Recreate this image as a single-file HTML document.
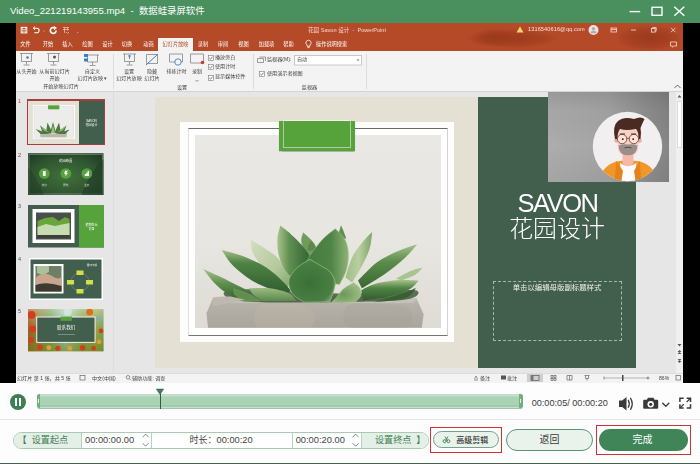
<!DOCTYPE html>
<html lang="zh-CN">
<head>
<meta charset="utf-8">
<title>Video_221219143955.mp4 - 数据蛙录屏软件</title>
<style>
html,body{margin:0;padding:0;}
body{width:700px;height:464px;position:relative;overflow:hidden;background:#fdfdfd;font-family:"Liberation Sans","Noto Sans CJK SC",sans-serif;}
.a{position:absolute;}
.t{position:absolute;white-space:nowrap;line-height:1;}
#titlebar{left:0;top:0;width:700px;height:23px;background:#4a905f;}
#title{left:10px;top:6px;font-size:9.6px;color:#fff;}
#video{left:0;top:23px;width:700px;height:360px;background:#000;}
#ppt{left:16px;top:23px;width:667px;height:360px;background:#e6e6e6;overflow:hidden;filter:blur(.35px);}
</style>
</head>
<body>
<!-- ===== app title bar ===== -->
<div class="a" id="titlebar"></div>
<div class="t" id="title">Video_221219143955.mp4&nbsp; -&nbsp; <span style="font-size:9.400px">数据蛙录屏软件</span></div>
<svg class="a" style="left:620px;top:0" width="80" height="23" viewBox="0 0 80 23">
  <g stroke="#fff" stroke-width="1.4" fill="none">
    <line x1="9.500" y1="11.600" x2="20.200" y2="11.600"/>
    <rect x="32" y="7.300" width="10" height="8"/>
    <line x1="54.300" y1="6.700" x2="64.300" y2="15.700"/><line x1="64.300" y1="6.700" x2="54.300" y2="15.700"/>
  </g>
</svg>
<!-- ===== video area ===== -->
<div class="a" id="video"></div>
<div class="a" id="ppt">
<div class="a" id="w" style="left:-16px;top:-23px;width:700px;height:464px;">
<style>
#w .t{color:#fff;font-size:5.2px;}
#w .r{color:#444;font-size:5.1px;}
#w .c{transform:translateX(-50%);}
.cb{position:absolute;width:5px;height:5px;border:0.7px solid #666;background:#fff;box-sizing:border-box;}
.cb:after{content:"";position:absolute;left:1px;top:-0.5px;width:1.5px;height:3px;border:solid #333;border-width:0 0.7px 0.7px 0;transform:rotate(40deg);}
.sep{position:absolute;width:1px;background:#dcdcdc;top:54px;height:35px;}
</style>
<!-- orange header -->
<div class="a" style="left:16px;top:23px;width:667px;height:28px;background:#b44a28;"></div>
<!-- darker blotches in header (decorative pattern in original) -->
<div class="a" style="left:466px;top:29px;width:92px;height:19px;background:radial-gradient(ellipse at center,rgba(140,48,22,.55),rgba(140,48,22,.35) 45%,rgba(140,48,22,0) 72%);"></div>
<div class="a" style="left:470px;top:27px;width:46px;height:20px;background:radial-gradient(ellipse at center,rgba(140,48,22,.4),rgba(140,48,22,0) 70%);"></div>
<div class="a" style="left:616px;top:25px;width:66px;height:26px;background:radial-gradient(ellipse at center,rgba(140,48,22,.6),rgba(140,48,22,.35) 45%,rgba(140,48,22,0) 72%);"></div>
<!-- quick access -->
<svg class="a" style="left:20px;top:26px" width="70" height="10" viewBox="0 0 70 10">
 <g fill="none" stroke="#fff" stroke-width="1">
  <rect x="1.200" y="1.300" width="5.600" height="5.600"/><path d="M2.500 1.500 v2 h3 v-2 M2.300 6.800 v-1.800 h3.400 v1.800" stroke-width=".7"/>
  <path d="M14.300 6.800 h2.500 a2.300 2.300 0 0 0 0 -4.600 h-3" stroke-width="1.100"/><path d="M15 .6 l-1.800 1.600 l1.800 1.600" stroke-width="1"/>
  <path d="M35.200 2.400 a2.900 2.900 0 1 0 .9 2.100" stroke-width="1.600"/><path d="M33.800 .3 l2.600 1.700 l-2.300 1.800" stroke-width="1"/>
  <path d="M43 1.500 h6 M43 3.500 h6 M44.500 1.500 v5.500 M47.500 1.500 v3 M46 6 l1.500 1.500 l1.500 -1.500" stroke-width=".7" stroke="#f3cfc4"/>
 </g>
 <circle cx="24" cy="5" r=".6" fill="#e9b5a5"/><circle cx="57.700" cy="6.500" r=".6" fill="#e9b5a5"/>
</svg>
<div class="t c" style="left:347px;top:28px;font-size:5.6px;color:#f3d6cc;">花园 Savon 设计&nbsp; -&nbsp; PowerPoint</div>
<svg class="a" style="left:515px;top:24px" width="168" height="26" viewBox="0 0 168 26">
 <path d="M5 2.5 L8.5 8.5 H1.5 Z" fill="#f5d26b"/>
 <circle cx="78.5" cy="6" r="5" fill="#e9e3e3"/><circle cx="78.5" cy="4.8" r="1.7" fill="#b9a9a6"/><path d="M75.3 9.3 a3.2 2.6 0 0 1 6.4 0 z" fill="#b9a9a6"/>
 <g fill="none" stroke="#f7ddd4" stroke-width=".8">
  <rect x="96" y="4" width="5.5" height="4"/><line x1="96" y1="5.5" x2="101.5" y2="5.5"/>
  <line x1="116" y1="6" x2="121" y2="6"/>
  <rect x="136.5" y="4.5" width="3.6" height="3.6"/><path d="M137.6 4.5 v-1 h3.6 v3.6 h-1"/>
  <path d="M156 3.8 l4.4 4.4 M160.4 3.8 l-4.4 4.4"/>
  <path d="M155.5 18 h6 v4 h-3 l-1.2 1.2 v-1.2 h-1.8 z"/>
 </g>
</svg>
<div class="t" style="left:528px;top:27px;font-size:5.6px;color:#f7e3dc;letter-spacing:.1px;">1316540616@qq.com</div>
<!-- tabs -->
<div class="a" style="left:158px;top:38px;width:35px;height:13px;background:#f3f3f3;"></div>
<div class="t c" style="left:25.5px;top:42px;">文件</div>
<div class="t c" style="left:48px;top:42px;">开始</div>
<div class="t c" style="left:67.5px;top:42px;">插入</div>
<div class="t c" style="left:87.5px;top:42px;">绘图</div>
<div class="t c" style="left:107.5px;top:42px;">设计</div>
<div class="t c" style="left:127px;top:42px;">切换</div>
<div class="t c" style="left:148.5px;top:42px;">动画</div>
<div class="t c" style="left:175.5px;top:42px;color:#b44a28;font-size:5.2px;">幻灯片放映</div>
<div class="t c" style="left:203px;top:42px;">录制</div>
<div class="t c" style="left:223px;top:42px;">审阅</div>
<div class="t c" style="left:243.5px;top:42px;">视图</div>
<div class="t c" style="left:266.5px;top:42px;">加载项</div>
<div class="t c" style="left:288.5px;top:42px;">帮助</div>
<svg class="a" style="left:304px;top:39px" width="9" height="11" viewBox="0 0 9 11"><path d="M4.5 1.2 a2.6 2.6 0 0 1 1.4 4.8 v1.3 h-2.8 v-1.3 a2.6 2.6 0 0 1 1.4 -4.8 z M3.4 8.6 h2.2" fill="none" stroke="#fff" stroke-width=".8"/></svg>
<div class="t" style="left:316px;top:42px;">操作说明搜索</div>
<!-- ribbon -->
<div class="a" style="left:16px;top:51px;width:667px;height:40px;background:#f3f3f3;border-bottom:1px solid #d4d4d4;"></div>
<svg class="a" style="left:16px;top:51px" width="360" height="40" viewBox="16 51 360 40">
 <g fill="none" stroke="#7d7d7d" stroke-width=".75">
  <!-- from beginning -->
  <path d="M20 53.5 h13 M21.5 53.5 v8 h10 v-8 M26.5 61.5 v3 M23.5 65 h6"/>
  <!-- from current -->
  <path d="M47 53.5 h13 M48.5 53.5 v8 h10 v-8 M53.5 61.5 v3 M50.5 65 h6"/>
  <!-- custom -->
  <path d="M86 55 h13 M87.500 55 v7 h10 v-7 M92.500 62 v3 M89.500 65.500 h6"/>
  <!-- set up -->
  <path d="M123 54 h13 M124.500 54 v7.500 h10 v-7.500 M129.500 61.500 v3 M126.500 65 h6"/>
  <!-- hide -->
  <path d="M146.500 54.500 h11 v9 h-11 z"/>
  <!-- rehearse -->
  <path d="M169.500 54 h13 v8 h-13 z"/>
  <!-- record -->
  <path d="M190.500 54 h13 v9 h-13 z"/>
  <!-- monitor -->
  <path d="M257.500 58.500 h6 v4 h-6 z M259.500 57 h6 v4" />
 </g>
 <circle cx="27.500" cy="57.500" r="1.300" fill="#3a7fc4"/><circle cx="54.500" cy="57" r="1.500" fill="#555"/>
 <path d="M84 54 h4 v3 h-4 z M84 58.500 h4 v3 h-4 z" fill="#3a7fc4"/>
 <path d="M128 56 h3 M129.500 55 v4" stroke="#3a7fc4" stroke-width=".9"/>
 <path d="M146 65 L158 54" stroke="#3a7fc4" stroke-width="1"/>
 <circle cx="178" cy="62" r="3.200" fill="#f3f3f3" stroke="#3a7fc4" stroke-width=".9"/>
 <circle cx="202.500" cy="62.500" r="1.800" fill="#d23b2c"/>
 <path d="M195.500 80 l1.500 1.500 l1.500 -1.500" fill="none" stroke="#666" stroke-width=".7"/>
 <rect x="294.500" y="55.500" width="67" height="9.500" fill="#fff" stroke="#bdbdbd" stroke-width=".8"/>
 <path d="M356.500 59.500 l1.500 1.500 l1.500 -1.500 z" fill="#666"/>
</svg>
<div class="t r c" style="left:26.5px;top:68.500px;">从头开始</div>
<div class="t r c" style="left:54.500px;top:68.500px;">从当前幻灯片</div>
<div class="t r c" style="left:54.500px;top:75.500px;">开始</div>
<div class="t r c" style="left:92.500px;top:68.500px;">自定义</div>
<div class="t r c" style="left:92.500px;top:75.500px;">幻灯片放映 ▾</div>
<div class="t r c" style="left:61px;top:84px;">开始放映幻灯片</div>
<div class="sep" style="left:113px;"></div>
<div class="t r c" style="left:129px;top:68.500px;">设置</div>
<div class="t r c" style="left:129px;top:75.500px;">幻灯片放映</div>
<div class="t r c" style="left:152px;top:68.500px;">隐藏</div>
<div class="t r c" style="left:152px;top:75.500px;">幻灯片</div>
<div class="t r c" style="left:176.500px;top:68.500px;">排练计时</div>
<div class="t r c" style="left:197px;top:68.500px;">录制</div>
<svg class="a" style="left:207.500px;top:54.800px;" width="6" height="6" viewBox="0 0 6 6"><rect x=".4" y=".4" width="5" height="5" fill="#fff" stroke="#7a7a7a" stroke-width=".6"/><path d="M1.300 3 l1.200 1.200 l2.200 -2.600" fill="none" stroke="#444" stroke-width=".7"/></svg><div class="t r" style="left:215px;top:54.500px;">播放旁白</div>
<svg class="a" style="left:207.500px;top:64.400px;" width="6" height="6" viewBox="0 0 6 6"><rect x=".4" y=".4" width="5" height="5" fill="#fff" stroke="#7a7a7a" stroke-width=".6"/><path d="M1.300 3 l1.200 1.200 l2.200 -2.600" fill="none" stroke="#444" stroke-width=".7"/></svg><div class="t r" style="left:215px;top:64px;">使用计时</div>
<svg class="a" style="left:207.500px;top:74.600px;" width="6" height="6" viewBox="0 0 6 6"><rect x=".4" y=".4" width="5" height="5" fill="#fff" stroke="#7a7a7a" stroke-width=".6"/><path d="M1.300 3 l1.200 1.200 l2.200 -2.600" fill="none" stroke="#444" stroke-width=".7"/></svg><div class="t r" style="left:215px;top:74.200px;">显示媒体控件</div>
<div class="t r c" style="left:182px;top:84.500px;">设置</div>
<div class="sep" style="left:253px;"></div>
<div class="t r" style="left:267px;top:57px;">监视器(M):</div>
<div class="t r" style="left:297px;top:57px;">自动</div>
<svg class="a" style="left:258.500px;top:71.200px;" width="6" height="6" viewBox="0 0 6 6"><rect x=".4" y=".4" width="5" height="5" fill="#fff" stroke="#7a7a7a" stroke-width=".6"/><path d="M1.300 3 l1.200 1.200 l2.200 -2.600" fill="none" stroke="#444" stroke-width=".7"/></svg><div class="t r" style="left:267px;top:70.800px;">使用演示者视图</div>
<div class="t r c" style="left:309.500px;top:84.500px;">监视器</div>
<div class="sep" style="left:366px;"></div>
<svg class="a" style="left:673px;top:83px" width="9" height="7" viewBox="0 0 9 7"><path d="M1.5 5 l3-3 l3 3" fill="none" stroke="#555" stroke-width=".9"/></svg>
<!-- workspace -->
<div class="a" style="left:16px;top:92px;width:667px;height:281px;background:#e6e6e6;"></div>
<div class="a" style="left:113px;top:92px;width:1px;height:281px;background:#dedede;"></div>
<!-- thumbnails -->
<div class="t" style="left:18px;top:99px;color:#b44a28 !important;font-size:5.5px;"><span style="color:#b44a28">1</span></div>
<div class="t" style="left:18px;top:153px;font-size:5.5px;"><span style="color:#555">2</span></div>
<div class="t" style="left:18px;top:204px;font-size:5.5px;"><span style="color:#555">3</span></div>
<div class="t" style="left:18px;top:257px;font-size:5.5px;"><span style="color:#555">4</span></div>
<div class="t" style="left:18px;top:309px;font-size:5.5px;"><span style="color:#555">5</span></div>
<!-- thumb1 -->
<div class="a" style="left:26.800px;top:99.300px;width:78.500px;height:45.500px;background:#a63f3b;"></div>
<svg class="a" style="left:28px;top:100.500px" width="76" height="43" viewBox="0 0 76 43">
 <rect width="76" height="43" fill="#e4e0d4"/><rect x="51" width="25" height="43" fill="#425e4c"/>
 <rect x="4.900" y="4.100" width="42.100" height="33.500" fill="#fdfdfc"/><rect x="6" y="5.300" width="39.800" height="31" fill="#ececea" stroke="#cfcdc6" stroke-width=".3"/>
 <rect x="20.100" y="4.300" width="11.200" height="4" fill="#55a33a"/>
 <path d="M12 32.600 h27 l-.6 3.600 h-25.800 z" fill="#bcb8ae"/>
 <g fill="#4a7a3d"><path d="M25 21 l3 11 h-6 z"/><path d="M19.500 21.500 l5 10.500 h-6.500 z"/><path d="M31 21.500 l-4.500 10.500 h6.500 z"/><path d="M12 24.500 l11 8 h-8 z"/><path d="M38.500 24.500 l-11 8 h8 z"/><path d="M7.600 28 l14 5 h-9 z"/><path d="M41.500 28.500 l-13 4.500 h9 z"/></g>
 <g fill="#9dbd84"><path d="M25 24 l2 8 h-4 z"/><path d="M12 24.500 l9 7 l-5 -2 z"/><path d="M38.500 24.500 l-9 7 l5 -2z"/></g>
 <text x="63.500" y="21" font-size="3" fill="#fff" text-anchor="middle" font-family="Liberation Sans, sans-serif">SAVON</text>
 <text x="63.500" y="24.500" font-size="3" fill="#fff" text-anchor="middle" font-family="Liberation Sans, Noto Sans CJK SC, sans-serif">花园设计</text>
</svg>
<!-- thumb2 -->
<svg class="a" style="left:28px;top:153.300px" width="75.500" height="42.200" viewBox="0 0 76 42">
 <defs><radialGradient id="g2" cx=".5" cy=".55" r=".75"><stop offset="0" stop-color="#416f3a"/><stop offset=".55" stop-color="#315731"/><stop offset="1" stop-color="#1d3423"/></radialGradient></defs>
 <rect width="76" height="42" fill="url(#g2)"/>
 <rect x="1" y="1" width="74" height="40" fill="none" stroke="#b9c9ae" stroke-width=".5" opacity=".8"/>
 <path d="M76 42 V6 Q62 18 54 42 z" fill="#1f3a26" opacity=".55"/>
 <path d="M0 42 V14 Q10 26 16 42 z" fill="#1f3a26" opacity=".4"/>
 <text x="38" y="9.300" font-size="3.400" fill="#fff" text-anchor="middle" font-family="Liberation Sans, Noto Sans CJK SC, sans-serif">花园布置</text>
 <circle cx="16.400" cy="20.400" r="5.400" fill="#57a23f"/><circle cx="38.100" cy="20.400" r="5.400" fill="#57a23f"/><circle cx="59.200" cy="20.400" r="5.400" fill="#57a23f"/>
 <rect x="15" y="18" width="2.800" height="4.800" fill="#fff"/><path d="M37.300 17.600 h2.800 l-1.400 2.400 h1.500 l-3 3.600 l.8 -2.800 h-1.500 z" fill="#fff"/><path d="M57.200 23 v-2 h1.400 v-1.400 h1.400 v-1.600 h1.400 v5 z" fill="#fff"/>
 <text x="16.400" y="33" font-size="2.600" fill="#e8f0e4" text-anchor="middle" font-family="Liberation Sans, Noto Sans CJK SC, sans-serif">水分</text>
 <text x="38.100" y="33" font-size="2.600" fill="#e8f0e4" text-anchor="middle" font-family="Liberation Sans, Noto Sans CJK SC, sans-serif">阳光</text>
 <text x="59.200" y="33" font-size="2.600" fill="#e8f0e4" text-anchor="middle" font-family="Liberation Sans, Noto Sans CJK SC, sans-serif">生长</text>
</svg>
<!-- thumb3 -->
<svg class="a" style="left:28px;top:205px" width="76" height="42.500" viewBox="0 0 76 42.500">
 <rect width="76" height="42.500" fill="#425e4c"/><rect x="51" width="25" height="42.500" fill="#55a33a"/>
 <rect x="4.500" y="4" width="42" height="34" fill="#fff"/><rect x="8" y="7.500" width="35" height="27" fill="#4a4f4a"/>
 <path d="M9.500 16 L17 13 L25 12 L31 16 L37 12 L41.500 14 V30 H9.500 z" fill="#6aa53c"/>
 <path d="M9.500 22 L18 19 L27 21 L34 19.500 L41.500 18 V30 H9.500 z" fill="#c5dcb0"/>
 <rect x="9.500" y="30" width="32" height="3" fill="#3b403b"/>
 <text x="63.500" y="21" font-size="3" fill="#fff" text-anchor="middle" font-family="Liberation Sans, Noto Sans CJK SC, sans-serif">植物生长</text>
 <text x="63.500" y="24.500" font-size="3" fill="#fff" text-anchor="middle" font-family="Liberation Sans, Noto Sans CJK SC, sans-serif">记录</text>
</svg>
<!-- thumb4 -->
<svg class="a" style="left:29px;top:257.500px" width="74" height="42" viewBox="0 0 74 42">
 <rect width="74" height="42" fill="#fff"/><rect x="1.500" y="1.500" width="71" height="39" fill="#425e4c"/>
 <rect x="4.500" y="6" width="30" height="29.500" fill="#fff"/><rect x="6.500" y="8" width="26" height="25.500" fill="#6e7f63"/>
 <path d="M6.500 20 Q14 12 23 18 T32.500 16 V33.500 H6.500 z" fill="#caa58e"/><path d="M6.500 27 Q17 23 32.500 28 V33.500 H6.500 z" fill="#3c3a33"/>
 <path d="M8 8 h12 v6 q-6 4 -12 1z" fill="#a9c29a"/>
 <text x="63" y="8" font-size="2.600" fill="#e8f0e4" text-anchor="middle" font-family="Liberation Sans, Noto Sans CJK SC, sans-serif">循环流程</text>
 <circle cx="51" cy="24" r="9" fill="none" stroke="#7f9a86" stroke-width=".5"/>
 <g fill="#cfe04a"><rect x="47.500" y="12.500" width="7" height="4.500"/><rect x="38" y="22" width="7" height="4.500"/><rect x="57" y="22" width="7" height="4.500"/><rect x="47.500" y="31" width="7" height="4.500"/></g>
</svg>
<!-- thumb5 -->
<svg class="a" style="left:28px;top:309.300px" width="75.500" height="42.400" viewBox="0 0 76 42.500">
 <defs><linearGradient id="g5" x1="0" y1="0" x2="1" y2="0"><stop offset="0" stop-color="#b8521f"/><stop offset=".14" stop-color="#9a8a3c"/><stop offset=".3" stop-color="#86ad6a"/><stop offset=".5" stop-color="#b9d9cf"/><stop offset=".72" stop-color="#8fb35a"/><stop offset=".9" stop-color="#a9b04a"/><stop offset="1" stop-color="#8aa86a"/></linearGradient>
 <linearGradient id="g5b" x1="0" y1="0" x2="0" y2="1"><stop offset="0" stop-color="#fff" stop-opacity=".3"/><stop offset=".5" stop-color="#5a7a2a" stop-opacity=".25"/><stop offset="1" stop-color="#6a7a1a" stop-opacity=".65"/></linearGradient></defs>
 <rect width="76" height="42.500" fill="url(#g5)"/><rect width="76" height="42.500" fill="url(#g5b)"/>
 <g fill="#cf3f1c"><circle cx="3.500" cy="6" r="4"/><circle cx="5" cy="20" r="3.600"/><circle cx="3" cy="31" r="3"/><circle cx="12" cy="38.500" r="3"/><circle cx="30" cy="39.500" r="2.600"/><circle cx="55" cy="39" r="2.800"/><circle cx="66" cy="39.500" r="2.400"/><circle cx="73.500" cy="22" r="2.400"/></g>
 <g fill="#e0a030"><circle cx="21" cy="39" r="2.500"/><circle cx="42" cy="39.500" r="2.500"/><circle cx="62" cy="3" r="3.500" fill="#d9701e"/><circle cx="71.500" cy="33" r="2.500"/></g>
 <g fill="#7fb0c0" opacity=".7"><circle cx="71" cy="10" r="3"/><circle cx="40" cy="3" r="4" fill="#d9ece8"/></g>
 <rect x="8.300" y="7.500" width="59.700" height="26.500" fill="#f4f4ee"/><rect x="9.300" y="8.500" width="57.700" height="24.500" fill="#425e4c"/>
 <rect x="32.700" y="7.500" width="11.500" height="4.300" fill="#55a33a"/>
 <text x="38.400" y="20.300" font-size="4.600" fill="#fff" text-anchor="middle" font-family="Liberation Sans, Noto Sans CJK SC, sans-serif">联系我们</text>
 <rect x="30" y="25.300" width="17" height=".6" fill="#9db5a2"/>
</svg>
<!-- ===== slide ===== -->
<div class="a" style="left:155px;top:96.500px;width:481px;height:271.500px;background:#e4e0d4;"></div>
<div class="a" style="left:477.500px;top:96.500px;width:158.500px;height:271.500px;background:#425e4c;"></div>
<div class="a" style="left:180px;top:121.500px;width:273.500px;height:220px;background:#fdfdfc;"></div>
<div class="a" style="left:187.500px;top:128px;width:260px;height:207.500px;background:#fff;box-sizing:border-box;border-top:.8px solid #6a6a66;border-bottom:.9px solid #77776f;border-left:.5px solid #e2e2de;border-right:.5px solid #d4d4cf;"></div>
<!--PHOTO_S--><svg class="a" style="left:194.500px;top:134.500px" width="246" height="193.500" viewBox="194.500 134.500 246 193.500">
<defs><linearGradient id="pbg" x1="0" y1="0" x2="0" y2="1"><stop offset="0" stop-color="#e9e8e5"/><stop offset="0.55" stop-color="#e7e6e1"/><stop offset="1" stop-color="#dedbd4"/></linearGradient><linearGradient id="pot" x1="0" y1="0" x2="0" y2="1"><stop offset="0" stop-color="#c3c0b7"/><stop offset="0.3" stop-color="#b5b1a8"/><stop offset="1" stop-color="#a9a59c"/></linearGradient><linearGradient id="gA" x1="0" y1="0" x2="1" y2="0"><stop offset="0" stop-color="#a9c38d"/><stop offset="0.35" stop-color="#5f8f50"/><stop offset="1" stop-color="#2f5f30"/></linearGradient><linearGradient id="gC" x1="0" y1="0" x2="1" y2="1"><stop offset="0" stop-color="#d3dec0"/><stop offset="0.6" stop-color="#b5c99c"/><stop offset="1" stop-color="#7fa56a"/></linearGradient><linearGradient id="gD" x1="0" y1="0" x2="0" y2="1"><stop offset="0" stop-color="#a3bf88"/><stop offset="0.3" stop-color="#4f8344"/><stop offset="1" stop-color="#2f5e30"/></linearGradient><linearGradient id="gE" x1="0" y1="0" x2="0" y2="1"><stop offset="0" stop-color="#a9c28e"/><stop offset="0.5" stop-color="#5f8f50"/><stop offset="1" stop-color="#37652f"/></linearGradient><linearGradient id="gG" x1="0" y1="0" x2="0" y2="1"><stop offset="0" stop-color="#9dba83"/><stop offset="1" stop-color="#5a8a4b"/></linearGradient><linearGradient id="gRA" x1="0" y1="0" x2="1" y2="0"><stop offset="0" stop-color="#447a3f"/><stop offset="0.6" stop-color="#4f8446"/><stop offset="1" stop-color="#8fb277"/></linearGradient><linearGradient id="gRB" x1="0" y1="0" x2="1" y2="0"><stop offset="0" stop-color="#9fbd85"/><stop offset="0.5" stop-color="#b9cfa0"/><stop offset="1" stop-color="#7fa568"/></linearGradient><linearGradient id="gRC" x1="0" y1="0" x2="0" y2="1"><stop offset="0" stop-color="#a5c18a"/><stop offset="0.4" stop-color="#5c8c4c"/><stop offset="1" stop-color="#37682f"/></linearGradient><linearGradient id="gRE" x1="0" y1="0" x2="0" y2="1"><stop offset="0" stop-color="#a8c38d"/><stop offset="0.4" stop-color="#4f8244"/><stop offset="1" stop-color="#2f5c2e"/></linearGradient><radialGradient id="gF" cx=".45" cy=".55" r=".65"><stop offset="0" stop-color="#3a7038"/><stop offset=".75" stop-color="#4a7f42"/><stop offset="1" stop-color="#8fb57a"/></radialGradient><radialGradient id="gS" cx=".4" cy=".6" r=".6"><stop offset="0" stop-color="#6c9858"/><stop offset="1" stop-color="#9bbb83"/></radialGradient></defs>
<rect x="194.500" y="134.500" width="246" height="193.500" fill="url(#pbg)"/>
<path d="M212.6 296.7 L310.2 294.5 L415.9 297.4 L423.1 313.8 L421.3 327.3 L207.5 327.3 L206.0 312.7 Z" fill="url(#pot)"/>
<path d="M212.6 296.7 L415.9 297.4 L412.9 302.5 L218.4 302.2 Z" fill="#cbc8bf" opacity=".6"/>
<path d="M259.2 304.0 C263.8 299.7 276.2 301.2 284.7 301.8 C293.2 302.4 306.3 303.4 310.2 307.6 C314.2 311.9 317.2 324.0 308.4 327.3 C299.6 330.6 265.6 331.2 257.4 327.3 C249.2 323.4 254.7 308.2 259.2 304.0 Z" fill="#c9bda3" opacity=".22"/>
<path d="M346.6 305.4 C351.5 301.4 369.1 302.8 379.4 303.3 C389.8 303.7 404.3 304.4 408.6 308.4 C412.8 312.4 414.6 324.1 404.9 327.3 C395.2 330.5 360.0 330.9 350.3 327.3 C340.6 323.7 341.8 309.4 346.6 305.4 Z" fill="#9a968e" opacity=".18"/>
<path d="M224.1 291.6 C227.3 289.8 237.4 288.6 253.2 288.7 C269.1 288.9 300.0 292.0 319.2 292.6 C338.3 293.3 352.3 293.1 368.2 292.6 C384.1 292.1 408.3 288.7 414.8 289.7 C421.2 290.7 418.0 296.8 407.0 298.8 C396.0 300.8 371.2 301.0 348.8 301.5 C326.4 302.1 291.8 302.2 272.6 301.9 C253.4 301.6 241.9 301.3 233.8 299.6 C225.7 297.9 220.9 293.5 224.1 291.6 Z" fill="#2f4a2c" opacity=".75"/>
<path d="M302.7 232.1 C304.1 233.4 309.2 237.6 311.4 240.2 C313.7 242.9 315.0 245.2 316.3 248.0 C317.6 250.7 318.7 255.3 319.2 256.7 L309.5 256.7 C308.5 255.6 305.1 252.7 303.7 249.9 C302.2 247.2 300.9 243.2 300.7 240.2 C300.6 237.2 302.4 233.4 302.7 232.1 Z" fill="#6f9b5b" stroke="#a9c590" stroke-width="0.4" stroke-linejoin="round"/>
<path d="M340.5 224.7 C340.9 225.7 342.1 228.3 343.0 230.5 C343.9 232.8 345.4 237.0 345.9 238.3 L337.2 236.3 C337.5 235.2 338.6 231.5 339.1 229.6 C339.7 227.6 340.2 225.5 340.5 224.7 Z" fill="#5f8e4e"/>
<path d="M311.0 240.2 C311.5 240.9 313.1 242.5 313.9 244.1 C314.7 245.7 315.5 249.0 315.8 249.9 L307.1 249.9 C307.3 249.0 307.4 245.7 308.1 244.1 C308.7 242.5 310.5 240.9 311.0 240.2 Z" fill="#5a8a4b"/>
<path d="M250.3 239.3 C252.4 240.5 258.5 244.1 262.9 247.0 C267.3 249.9 272.5 252.7 276.5 256.7 C280.5 260.8 284.6 266.9 287.2 271.3 C289.8 275.6 291.2 281.0 292.0 282.9 L286.2 286.8 C283.9 285.2 276.8 280.6 272.6 277.1 C268.4 273.5 264.4 269.7 261.0 265.4 C257.6 261.2 254.0 256.2 252.2 251.9 C250.5 247.5 250.6 241.4 250.3 239.3 Z" fill="url(#gC)"/>
<path d="M371.7 231.5 C371.3 234.2 370.9 242.3 369.2 248.0 C367.5 253.6 364.3 259.8 361.4 265.4 C358.5 271.1 353.3 279.2 351.7 281.9 L344.9 277.1 C346.1 273.7 348.8 262.7 351.7 256.7 C354.6 250.7 359.1 245.4 362.4 241.2 C365.7 237.0 370.1 233.1 371.7 231.5 Z" fill="url(#gRB)"/>
<path d="M279.8 225.1 C281.5 226.5 286.6 230.3 290.1 233.4 C293.6 236.6 297.5 240.2 300.7 244.1 C304.0 248.0 307.7 251.9 309.5 256.7 C311.3 261.6 311.1 270.5 311.4 273.2 L291.0 277.1 C289.8 275.5 285.5 271.3 283.3 267.4 C281.1 263.5 279.1 258.7 278.0 253.8 C277.0 249.0 276.6 243.1 276.9 238.3 C277.2 233.5 279.3 227.3 279.8 225.1 Z" fill="url(#gA)"/>
<path d="M416.7 243.7 C413.6 244.8 404.9 247.3 398.3 250.3 C391.7 253.3 383.7 256.6 376.9 261.6 C370.1 266.5 360.8 276.9 357.5 280.0 L361.4 287.8 C365.3 285.3 377.4 278.4 384.7 273.2 C392.0 268.0 399.7 261.6 405.1 256.7 C410.4 251.8 414.8 245.9 416.7 243.7 Z" fill="url(#gRC)"/>
<path d="M422.1 267.0 C420.3 267.5 415.4 268.5 410.9 270.3 C406.4 272.1 398.0 276.8 395.4 278.1 L401.2 280.0 C403.5 279.0 411.3 276.3 414.8 274.2 C418.3 272.0 420.9 268.2 422.1 267.0 Z" fill="#a9c490"/>
<path d="M221.2 249.5 C224.9 250.6 236.1 253.2 243.5 256.1 C250.9 259.0 259.4 262.9 265.8 267.0 C272.3 271.1 278.3 277.2 282.3 281.0 C286.4 284.8 288.8 288.2 290.1 289.7 L288.1 292.6 C285.5 292.1 278.8 291.8 272.6 289.7 C266.5 287.6 258.1 284.2 251.3 280.0 C244.5 275.8 236.9 269.6 231.9 264.5 C226.9 259.4 223.0 252.0 221.2 249.5 Z" fill="url(#gD)"/>
<path d="M334.8 228.2 C336.4 229.9 341.8 234.3 344.0 238.3 C346.1 242.2 347.5 246.7 347.8 251.9 C348.2 257.0 347.4 264.0 345.9 269.3 C344.4 274.7 340.2 281.5 339.1 283.9 L304.2 279.0 C304.5 276.1 304.5 266.6 306.1 261.6 C307.7 256.6 311.0 253.0 313.9 249.0 C316.8 244.9 320.1 240.8 323.6 237.3 C327.1 233.9 333.0 229.7 334.8 228.2 Z" fill="url(#gRA)" stroke="#9dbd85" stroke-width="0.5" stroke-linejoin="round"/>
<path d="M418.3 280.0 C414.9 279.9 405.5 279.1 398.3 279.6 C391.1 280.2 381.2 281.6 375.0 283.3 C368.8 285.0 363.2 288.6 360.8 289.7 L362.4 300.0 C366.9 299.2 381.8 297.4 389.6 295.5 C397.3 293.6 404.2 291.3 409.0 288.7 C413.7 286.1 416.7 281.5 418.3 280.0 Z" fill="url(#gRE)"/>
<path d="M415.7 287.2 C413.6 288.1 407.8 290.9 403.1 292.6 C398.4 294.3 390.2 296.7 387.6 297.5 L374.0 301.7 C379.2 301.0 398.1 299.9 405.1 297.5 C412.0 295.0 414.0 288.9 415.7 287.2 Z" fill="#37622f"/>
<path d="M202.8 268.4 C205.5 269.7 213.3 273.2 219.3 276.1 C225.2 279.0 233.2 283.1 238.7 285.8 C244.2 288.5 250.0 291.2 252.2 292.2 L236.7 298.0 C234.9 297.1 229.9 295.3 226.0 292.6 C222.2 289.9 217.3 286.0 213.4 281.9 C209.6 277.9 204.5 270.6 202.8 268.4 Z" fill="url(#gE)"/>
<path d="M233.2 288.3 C235.3 289.1 241.0 290.6 245.4 292.6 C249.9 294.6 257.6 299.1 260.0 300.4 L243.5 300.8 C242.1 299.7 236.5 296.6 234.8 294.6 C233.1 292.5 233.5 289.4 233.2 288.3 Z" fill="#5f8e4d" stroke="#8eb077" stroke-width="0.4" stroke-linejoin="round"/>
<path d="M248.4 287.8 C251.8 287.8 262.1 287.0 268.7 287.8 C275.4 288.6 283.6 290.5 288.1 292.6 C292.7 294.7 294.6 299.1 295.9 300.4 L261.0 300.4 C259.7 299.4 255.3 296.7 253.2 294.6 C251.1 292.5 249.2 288.9 248.4 287.8 Z" fill="url(#gG)"/>
<path d="M353.1 281.9 C354.1 282.9 358.3 285.5 359.5 287.8 C360.6 290.0 360.9 293.2 360.1 295.5 C359.3 297.9 355.5 300.7 354.6 301.7 L331.3 301.7 C332.2 300.9 334.3 298.7 336.2 296.5 C338.1 294.3 340.2 290.8 343.0 288.3 C345.8 285.9 351.4 283.0 353.1 281.9 Z" fill="url(#gS)" stroke="#b5cf9e" stroke-width="0.4" stroke-linejoin="round"/>
<path d="M309.5 258.7 C311.4 259.9 317.8 263.7 321.1 265.8 C324.4 267.9 327.1 268.4 329.4 271.3 C331.7 274.1 334.8 277.9 334.8 282.9 C334.8 287.9 330.3 298.3 329.4 301.3 L303.7 301.7 C301.6 300.2 294.0 296.4 291.4 292.6 C288.9 288.8 287.6 283.3 288.5 279.0 C289.4 274.8 293.4 270.4 296.9 267.0 C300.4 263.6 307.4 260.0 309.5 258.7 Z" fill="url(#gF)" stroke="#a5c68f" stroke-width="0.6" stroke-linejoin="round"/>
<path d="M212.6 297.4 L217.3 296.3 L230.1 296.0 L244.6 299.2 L212.6 305.4 Z" fill="#bdb9b0"/>
</svg><!--PHOTO_E-->
<div class="a" style="left:278.500px;top:121px;width:76.500px;height:30px;background:#55a33a;box-shadow:0 .5px 1px rgba(0,0,0,.25);"><div class="a" style="left:4px;top:-1px;right:4px;bottom:2.800px;border:.6px solid rgba(255,255,255,.5);"></div></div>
<div class="t c" style="left:557.500px;top:190.800px;"><span style="font-size:25.500px;letter-spacing:-1.500px;color:#fff;">SAVON</span></div>
<div class="t c" style="left:557px;top:216.500px;"><span style="font-size:23.900px;color:#fff;font-weight:300;font-family:'Liberation Sans','Noto Sans CJK SC',sans-serif;">花园设计</span></div>
<div class="a" style="left:493px;top:281px;width:129px;height:60px;border:.6px dashed rgba(200,215,205,.75);box-sizing:border-box;"></div>
<div class="t c" style="left:557px;top:284px;"><span style="font-size:7.400px;color:#f0f3f0;">单击以编辑母版副标题样式</span></div>
<!--WEBCAM_S--><svg class="a" style="left:548px;top:92px" width="121" height="90" viewBox="548 92 121 90">
 <defs>
  <linearGradient id="wbg" x1="0" y1="0" x2="1" y2="0"><stop offset="0" stop-color="#aaaaaa"/><stop offset=".5" stop-color="#a2a2a2"/><stop offset=".8" stop-color="#8e8e8e"/><stop offset="1" stop-color="#828282"/></linearGradient>
  <linearGradient id="wbg2" x1="0" y1="0" x2="0" y2="1"><stop offset="0" stop-color="#000" stop-opacity=".1"/><stop offset=".2" stop-color="#000" stop-opacity=".02"/><stop offset=".6" stop-color="#fff" stop-opacity=".04"/><stop offset="1" stop-color="#000" stop-opacity=".03"/></linearGradient>
  <clipPath id="avc"><circle cx="627.500" cy="146.500" r="34.700"/></clipPath>
 </defs>
 <rect x="548" y="92" width="121" height="90" fill="url(#wbg)"/><rect x="548" y="92" width="121" height="90" fill="url(#wbg2)"/>
 <circle cx="627.500" cy="146.500" r="34.700" fill="#f1eff0"/>
 <g clip-path="url(#avc)">
  <!-- jacket -->
  <path d="M597 186 Q600 167 616 161.500 L628 160 L640 161.500 Q656 166 659 186 Z" fill="#f0962a"/>
  <path d="M620 163 L622 186 H635 L636.500 163 Q628 169 620 163 Z" fill="#fbfbfd"/>
  <path d="M616.500 161 L623 171 L620.500 186 H614 Z" fill="#e58318"/><path d="M639.500 161 L634 171 L636.500 186 H642 Z" fill="#e58318"/>
  <!-- neck -->
  <path d="M622.500 150 H633.500 V163.500 Q628 169 622.500 163.500 Z" fill="#f6b9a8"/>
  <!-- ears -->
  <circle cx="616.500" cy="140.500" r="2.200" fill="#f2a896"/><circle cx="639.500" cy="140.500" r="2.200" fill="#f2a896"/>
  <!-- face -->
  <path d="M617.500 130 H638.500 V145 Q638.500 156 628 156 Q617.500 156 617.500 145 Z" fill="#fad0c2"/>
  <!-- beard -->
  <path d="M618.500 145.500 Q623 143.500 628 144.500 Q633 143.500 637.500 145.500 Q637 155.500 628 155.500 Q619 155.500 618.500 145.500 Z" fill="#9a8e8a"/>
  <path d="M624.500 147.800 Q628 146.500 631.500 147.800" stroke="#5c4a44" stroke-width="1" fill="none"/>
  <!-- hair -->
  <path d="M615 139 Q612 126 618 121 Q624 116 634 119 Q641 116 644.500 119 Q642 124 640.500 128 Q641.500 133 640.500 139 L638.500 139 Q638.500 131 636 129 Q626 131 620 129 Q617.500 132 617.500 139 Z" fill="#4b2a21"/>
  <!-- glasses -->
  <circle cx="622.100" cy="139" r="4.700" fill="#fde3da" stroke="#6a3a33" stroke-width=".8"/><circle cx="633.900" cy="139" r="4.700" fill="#fde3da" stroke="#6a3a33" stroke-width=".8"/>
  <path d="M626.800 138.300 h2.400" stroke="#6a3a33" stroke-width=".8"/>
  <circle cx="622.800" cy="139.200" r=".9" fill="#3a2420"/><circle cx="633.200" cy="139.200" r=".9" fill="#3a2420"/>
  <path d="M620 134 h5 M631 134 h5" stroke="#4b2a21" stroke-width="1"/>
 </g>
</svg>
<!--WEBCAM_E-->
<!-- scrollbar -->
<div class="a" style="left:676px;top:92px;width:7px;height:281px;background:#f0f0f0;"></div>
<div class="a" style="left:677px;top:101px;width:5px;height:47px;background:#fdfdfd;border:.5px solid #dcdcdc;box-sizing:border-box;"></div>
<svg class="a" style="left:676px;top:92px" width="7" height="281" viewBox="0 0 7 281"><path d="M1.500 5.500 l2-2.500 l2 2.500 z M1.500 252 l2 2.500 l2-2.500 z M1.500 260 l2-2 l2 2 z M1.500 262 l2-2 l2 2z M1.500 267 l2 2 l2-2 z M1.500 269 l2 2 l2-2z" fill="#555"/></svg>
<!-- status bar -->
<div class="a" style="left:16px;top:372.500px;width:667px;height:10.500px;background:#f3f3f3;border-top:.5px solid #dcdcdc;box-sizing:border-box;"></div>
<div class="t r" style="left:17px;top:375.500px;">幻灯片 第 1 张，共 5 张</div>
<div class="t r" style="left:92px;top:375.500px;">中文(中国)</div>
<div class="t r" style="left:132px;top:375.500px;">辅助功能: 调查</div>
<div class="t r" style="left:480px;top:375.500px;">备注</div>
<div class="t r" style="left:507px;top:375.500px;">批注</div>
<div class="t r" style="left:659px;top:375.500px;">86%</div>
<svg class="a" style="left:16px;top:373px" width="667" height="10" viewBox="16 373 667 10">
 <g fill="none" stroke="#666" stroke-width=".7">
  <rect x="80" y="375.500" width="5" height="4.500"/>
  <circle cx="128" cy="377.300" r="1.800"/><path d="M129.500 378.800 l1.500 1.500"/>
  <path d="M474 380 h4 M474.500 379 l1.500-3 l1.500 3"/>
  <rect x="551" y="375.500" width="2" height="2"/><rect x="554" y="375.500" width="2" height="2"/><rect x="551" y="378.500" width="2" height="2"/><rect x="554" y="378.500" width="2" height="2"/>
  <path d="M567 375.500 h5 v4.500 h-5 z M569.500 375.500 v4.500"/>
  <path d="M584.500 375.500 h5 M585.500 375.500 v3 h3 v-3 M587 378.500 v2"/>
  <path d="M604 378 h44" stroke="#999"/>
  <rect x="676" y="375.500" width="4.500" height="4.500"/>
 </g>
 <rect x="501" y="375.500" width="5" height="4" fill="#555"/>
 <rect x="527" y="374" width="16" height="8" fill="#cfcfcf"/><rect x="531" y="375.500" width="8" height="5" fill="none" stroke="#555" stroke-width=".7"/><rect x="531" y="375.500" width="2.500" height="5" fill="#777"/>
 <rect x="622" y="375" width="1.500" height="6" fill="#444"/><path d="M604 376.500 v3 M648 376.500 v3 M646.500 378 h3" stroke="#666" stroke-width=".7"/>
</svg>

</div>

</div>
<!--CTL_S--><!-- ===== playback controls ===== -->
<div class="a" style="left:0;top:383px;width:700px;height:79px;background:#fdfdfd;"></div>
<div class="a" style="left:9.500px;top:393.800px;width:16.500px;height:16.500px;border-radius:50%;background:#3f7d52;"></div>
<div class="a" style="left:15.100px;top:398.400px;width:1.800px;height:7.300px;background:#fff;"></div>
<div class="a" style="left:19.100px;top:398.400px;width:1.800px;height:7.300px;background:#fff;"></div>
<div class="a" style="left:36.500px;top:394.200px;width:486px;height:14.800px;border-radius:2.500px;background:linear-gradient(to bottom,#c3dfca 0,#c3dfca 14.9%,#aad2b4 18.9%,#aad2b4 73.0%,#a4c9ad 75.7%,#a4c9ad 85.8%,#c6e1cd 87.2%,#c6e1cd 93.9%,#a3c2ac 95.3%,#a3c2ac 100%);"></div>
<div class="a" style="left:36.500px;top:394.300px;width:3.500px;height:14px;border-radius:2.500px 0 0 2.500px;background:#6fb07f;"></div>
<div class="a" style="left:37.600px;top:398.800px;width:1.200px;height:4.500px;background:#e6f4e9;"></div>
<div class="a" style="left:519px;top:394.300px;width:3.500px;height:14px;border-radius:0 2.500px 2.500px 0;background:#6fb07f;"></div>
<div class="a" style="left:520.200px;top:398.800px;width:1.200px;height:4.500px;background:#e6f4e9;"></div>
<div class="a" style="left:159.600px;top:393px;width:.9px;height:16px;background:#2f5e3f;"></div>
<svg class="a" style="left:155px;top:388px" width="10" height="8" viewBox="0 0 10 8"><path d="M1.300 1 H8.700 L5 6.500 Z" fill="#3f7d52" stroke="#2f5e3f" stroke-width=".5"/></svg>
<div class="t" style="left:531.700px;top:398.700px;font-size:9.150px;color:#3a3a3a;">00:00:05/ 00:00:20</div>
<svg class="a" style="left:616px;top:394px" width="80" height="18" viewBox="616 394 80 18">
 <g fill="#3a3a3a">
  <path d="M619 400.500 h3.200 l4.300 -3.500 v13.500 l-4.300 -3.500 h-3.200 z"/>
  <path d="M644.200 399.700 h2.600 l1.200 -2 h5.400 l1.200 2 h2.600 q1 0 1 1 v7 q0 1 -1 1 h-13 q-1 0 -1 -1 v-7 q0 -1 1 -1 z"/>
 </g>
 <path d="M628.300 400.300 q2 3.500 0 7 M630.600 398.300 q3.300 5.500 0 11" fill="none" stroke="#3a3a3a" stroke-width="1.300" stroke-linecap="round"/>
 <circle cx="650.700" cy="404.300" r="3.200" fill="#fdfdfd"/><circle cx="650.700" cy="404.300" r="1.600" fill="#3a3a3a"/>
 <path d="M662.300 402.800 l3.500 3.500 l3.500 -3.500" fill="none" stroke="#3a3a3a" stroke-width="1.300"/>
 <path d="M679.900 402 v-3.800 h3.800 M686.700 398.200 h3.800 v3.800 M690.500 404.200 v3.800 h-3.800 M683.700 408 h-3.800 v-3.800" fill="none" stroke="#3a3a3a" stroke-width="1.500"/><path d="M690.200 398.500 l-3.600 3.600 M680.200 407.700 l3.600 -3.600" fill="none" stroke="#3a3a3a" stroke-width="1.300"/>
</svg>
<div class="a" style="left:0;top:419px;width:700px;height:1px;background:#e4e4e4;"></div>
<!-- ===== trim row ===== -->
<div class="a" style="left:13px;top:431.500px;width:416px;height:17px;box-sizing:border-box;border:1px solid #a5cbb0;border-radius:8.500px;background:#fff;overflow:hidden;">
  <div class="a" style="left:0;top:0;width:67px;height:15px;background:#e4efe7;border-right:1px solid #b5d3bd;"></div>
  <div class="a" style="left:137px;top:0;width:1px;height:15px;background:#b5d3bd;"></div>
  <div class="a" style="left:277.500px;top:0;width:1px;height:15px;background:#b5d3bd;"></div>
  <div class="a" style="left:347px;top:0;width:68px;height:15px;background:#e4efe7;border-left:1px solid #b5d3bd;"></div>
</div>
<div class="t" style="left:17.500px;top:435.500px;font-size:9.200px;color:#3f7d52;">【</div>
<div class="t" style="left:31.700px;top:435.500px;font-size:9.100px;color:#3f7d52;">设置起点</div>
<div class="t" style="left:85px;top:435.800px;font-size:9.300px;color:#444;">00:00:00.00</div>
<div class="t" style="left:189.500px;top:435.800px;font-size:9.300px;color:#444;"><span style="font-size:9px">时长：</span>00:00:20</div>
<div class="t" style="left:295.700px;top:435.800px;font-size:9.300px;color:#444;">00:00:20.00</div>
<div class="t" style="left:375px;top:435.500px;font-size:9.100px;color:#3f7d52;">设置终点</div><div class="t" style="left:416.300px;top:435.500px;font-size:9.200px;color:#3f7d52;">】</div>
<svg class="a" style="left:140px;top:432px" width="220" height="16" viewBox="140 432 220 16"><path d="M142.600 437.200 l3 -3 l3 3 M142.600 443.200 l3 3 l3 -3 M352.600 437.200 l3 -3 l3 3 M352.600 443.200 l3 3 l3 -3" fill="none" stroke="#666" stroke-width=".8"/></svg>
<!-- advanced edit -->
<div class="a" style="left:429.700px;top:427px;width:72.500px;height:26px;box-sizing:border-box;border:1.700px solid #cf3339;"></div>
<div class="a" style="left:433.200px;top:431.300px;width:66px;height:17px;box-sizing:border-box;border:1px solid #76a287;border-radius:8.500px;background:#e9f2eb;"></div>
<svg class="a" style="left:441.200px;top:435px" width="11" height="10" viewBox="0 0 11 10"><path d="M4.100 1.600 L6.400 5.800 M6.900 1.600 L4.600 5.800" stroke="#3f7d52" stroke-width=".9" fill="none"/><circle cx="3.600" cy="6.200" r="1.500" fill="none" stroke="#3f7d52" stroke-width=".9"/><circle cx="7.400" cy="6.200" r="1.500" fill="none" stroke="#3f7d52" stroke-width=".9"/></svg>
<div class="t" style="left:456.200px;top:436.800px;font-size:8px;color:#383838;font-weight:500;">高级剪辑</div>
<!-- back -->
<div class="a" style="left:506px;top:429px;width:87px;height:22px;box-sizing:border-box;border:1px solid #5f9572;border-radius:11px;background:#e9f2eb;"></div>
<div class="t" style="left:549.500px;top:435px;font-size:10px;color:#3a3a3a;transform:translateX(-50%);">返回</div>
<!-- done -->
<div class="a" style="left:596px;top:424.500px;width:95.200px;height:30.200px;box-sizing:border-box;border:1.800px solid #cf3339;"></div>
<div class="a" style="left:599px;top:429px;width:88.500px;height:22px;border-radius:11px;background:#408557;"></div>
<div class="t" style="left:642.500px;top:435px;font-size:10px;color:#fff;transform:translateX(-50%);">完成</div>
<!-- bottom edge -->
<div class="a" style="left:0;top:462.700px;width:700px;height:1.300px;background:#46624f;"></div>
<!--CTL_E-->
</body>
</html>
